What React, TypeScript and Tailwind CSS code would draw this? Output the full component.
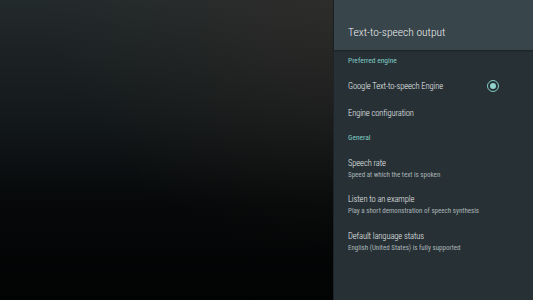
export default function App() {
  return (
    <div className="flex h-[300px] w-[533px] overflow-hidden font-['Roboto_Condensed','Roboto',sans-serif]">
      {/* background behind the side panel */}
      <div className="h-full flex-1 bg-[radial-gradient(ellipse_at_top_right,rgba(70,52,40,0.3),transparent_60%),linear-gradient(to_bottom,#232a2c_0%,#14191b_38%,#060809_68%,#020303_100%)]" />

      {/* settings side panel */}
      <div className="flex h-full w-[200px] flex-col border-l border-[#1c2427] bg-[#273135]">
        <div className="flex h-[50px] shrink-0 items-center bg-[#38454a] px-[14px] pt-[16px] shadow-[0_1px_2px_rgba(0,0,0,0.35)]">
          <span className="text-[11.5px] font-light text-[#eceff1]">Text-to-speech output</span>
        </div>

        <div className="flex flex-col px-[14px]">
          <div className="mt-[6px] h-[10px] text-[7.5px] leading-[10px] text-[#80cbc4]">Preferred engine</div>

          <div className="mt-[10px] flex h-[20px] items-center justify-between">
            <span className="text-[8.5px] font-light tracking-[-0.1px] text-[#eceff1]">Google Text-to-speech Engine</span>
            <span className="mr-[20px] flex size-[12px] items-center justify-center rounded-full border-[1.5px] border-[#80cbc4]">
              <span className="size-[6px] rounded-full bg-[#8fd3cc]" />
            </span>
          </div>

          <div className="mt-[7px] flex h-[20px] items-center text-[8.5px] font-light tracking-[-0.1px] text-[#eceff1]">
            Engine configuration
          </div>

          <div className="mt-[10px] h-[10px] text-[7.5px] leading-[10px] text-[#80cbc4]">General</div>

          <Item title="Speech rate" sub="Speed at which the text is spoken" className="mt-[14px]" />
          <Item title="Listen to an example" sub="Play a short demonstration of speech synthesis" className="mt-[12px]" />
          <Item title="Default language status" sub="English (United States) is fully supported" className="mt-[13px]" />
        </div>
      </div>
    </div>
  );
}

function Item({ title, sub, className }: { title: string; sub: string; className?: string }) {
  return (
    <div className={`flex flex-col ${className ?? ""}`}>
      <span className="text-[8.5px] font-light leading-[12px] tracking-[-0.1px] text-[#eceff1]">{title}</span>
      <span className="text-[7px] leading-[12px] text-[#aab4b8]">{sub}</span>
    </div>
  );
}
